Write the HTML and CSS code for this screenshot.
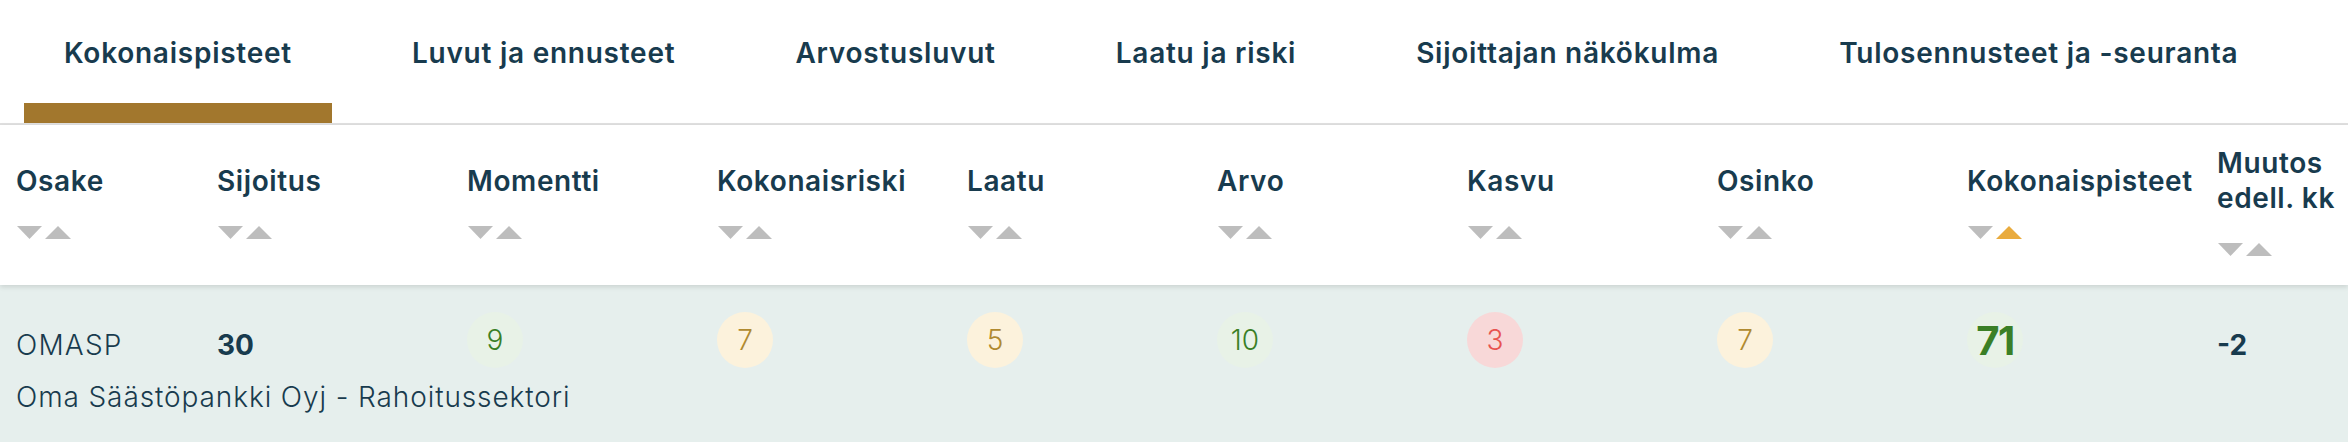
FILE: index.html
```html
<!DOCTYPE html>
<html lang="fi">
<head>
<meta charset="utf-8">
<title>Kokonaispisteet</title>
<link rel="stylesheet" href="styles.css">
</head>
<body>
<div class="page">
  <nav class="tabs">
    <a class="tab active">Kokonaispisteet</a>
    <a class="tab">Luvut ja ennusteet</a>
    <a class="tab">Arvostusluvut</a>
    <a class="tab">Laatu ja riski</a>
    <a class="tab">Sijoittajan näkökulma</a>
    <a class="tab">Tulosennusteet ja -seuranta</a>
  </nav>

  <div class="table">
    <div class="thead">
      <div class="th"><span class="th-label">Osake</span><svg class="sort" viewBox="0 0 54 13" width="54" height="13"><polygon class="dn" points="0,0 25,0 12.5,13"/><polygon class="up" points="28,13 54,13 41,0"/></svg></div>
      <div class="th"><span class="th-label">Sijoitus</span><svg class="sort" viewBox="0 0 54 13" width="54" height="13"><polygon class="dn" points="0,0 25,0 12.5,13"/><polygon class="up" points="28,13 54,13 41,0"/></svg></div>
      <div class="th"><span class="th-label">Momentti</span><svg class="sort" viewBox="0 0 54 13" width="54" height="13"><polygon class="dn" points="0,0 25,0 12.5,13"/><polygon class="up" points="28,13 54,13 41,0"/></svg></div>
      <div class="th"><span class="th-label">Kokonaisriski</span><svg class="sort" viewBox="0 0 54 13" width="54" height="13"><polygon class="dn" points="0,0 25,0 12.5,13"/><polygon class="up" points="28,13 54,13 41,0"/></svg></div>
      <div class="th"><span class="th-label">Laatu</span><svg class="sort" viewBox="0 0 54 13" width="54" height="13"><polygon class="dn" points="0,0 25,0 12.5,13"/><polygon class="up" points="28,13 54,13 41,0"/></svg></div>
      <div class="th"><span class="th-label">Arvo</span><svg class="sort" viewBox="0 0 54 13" width="54" height="13"><polygon class="dn" points="0,0 25,0 12.5,13"/><polygon class="up" points="28,13 54,13 41,0"/></svg></div>
      <div class="th"><span class="th-label">Kasvu</span><svg class="sort" viewBox="0 0 54 13" width="54" height="13"><polygon class="dn" points="0,0 25,0 12.5,13"/><polygon class="up" points="28,13 54,13 41,0"/></svg></div>
      <div class="th"><span class="th-label">Osinko</span><svg class="sort" viewBox="0 0 54 13" width="54" height="13"><polygon class="dn" points="0,0 25,0 12.5,13"/><polygon class="up" points="28,13 54,13 41,0"/></svg></div>
      <div class="th"><span class="th-label">Kokonaispisteet</span><svg class="sort" viewBox="0 0 54 13" width="54" height="13"><polygon class="dn" points="0,0 25,0 12.5,13"/><polygon class="up active" points="28,13 54,13 41,0"/></svg></div>
      <div class="th"><span class="th-label">Muutos<br>edell. kk</span><svg class="sort" viewBox="0 0 54 13" width="54" height="13"><polygon class="dn" points="0,0 25,0 12.5,13"/><polygon class="up" points="28,13 54,13 41,0"/></svg></div>
    </div>

    <div class="trow">
      <div class="td">
        <div class="txt ticker">OMASP</div>
        <div class="company">Oma Säästöpankki Oyj - Rahoitussektori</div>
      </div>
      <div class="td"><div class="txt strong">30</div></div>
      <div class="td"><span class="score good">9</span></div>
      <div class="td"><span class="score mid">7</span></div>
      <div class="td"><span class="score mid">5</span></div>
      <div class="td"><span class="score good">10</span></div>
      <div class="td"><span class="score bad">3</span></div>
      <div class="td"><span class="score mid">7</span></div>
      <div class="td"><span class="score good total">71</span></div>
      <div class="td"><div class="txt strong">-2</div></div>
    </div>
  </div>
</div>
</body>
</html>
```

FILE: styles.css
```css
html, body {
  margin: 0;
  padding: 0;
  background: #ffffff;
}

body {
  font-family: Inter, "Open Sans", "Liberation Sans", sans-serif;
  color: #183b4e;
  width: 2348px;
  height: 442px;
  overflow: hidden;
}

.page {
  display: flex;
  flex-direction: column;
  height: 442px;
}

/* Tabs */
.tabs {
  display: flex;
  gap: 40px;
  padding-left: 24px;
  border-bottom: 2px solid #e0e0e0;
  flex: 0 0 auto;
}

.tab {
  box-sizing: border-box;
  height: 123px;
  padding: 36px 40px 0;
  font-size: 28px;
  line-height: 34px;
  font-weight: 600;
  letter-spacing: 0.75px;
  color: #183b4e;
  white-space: nowrap;
  border-bottom: 20px solid transparent;
  text-decoration: none;
}

.tab.active {
  border-bottom-color: #a2772d;
}

/* Table */
.table {
  display: flex;
  flex-direction: column;
  flex: 1 1 auto;
}

.thead,
.trow {
  display: grid;
  grid-template-columns: 201px repeat(8, 250px) 1fr;
}

.thead {
  box-sizing: border-box;
  height: 160px;
  padding-bottom: 8px;
  background: #ffffff;
  position: relative;
  z-index: 1;
  box-shadow: 0 2px 5px rgba(0, 0, 0, 0.12);
}

.th {
  padding-left: 16px;
  display: flex;
  flex-direction: column;
  justify-content: center;
  align-items: flex-start;
}

.th-label {
  font-size: 28px;
  line-height: 35px;
  font-weight: 600;
  letter-spacing: 0.6px;
  white-space: nowrap;
}

.sort {
  display: block;
  margin-top: 27px;
  margin-left: 1px;
}

.sort polygon {
  fill: #bdbdbd;
}

.sort polygon.active {
  fill: #e9ab3e;
}

.trow {
  flex: 1 1 auto;
  background: #e6efed;
}

.td {
  padding: 27px 0 0 16px;
  min-width: 0;
}

.txt {
  margin-top: 16px;
  font-size: 28px;
  line-height: 35px;
  white-space: nowrap;
}

.ticker {
  font-weight: 300;
  letter-spacing: 1.2px;
}

.strong {
  font-weight: 700;
}

.company {
  margin-top: 17px;
  font-size: 28px;
  line-height: 35px;
  font-weight: 300;
  letter-spacing: 0.9px;
  white-space: nowrap;
}

.score {
  display: flex;
  align-items: center;
  justify-content: center;
  width: 56px;
  height: 56px;
  border-radius: 50%;
  font-size: 28px;
  font-weight: 300;
}

.score.good {
  background: #e8f2e7;
  color: #3a7f26;
}

.score.mid {
  background: #fcf2dc;
  color: #b08a30;
}

.score.bad {
  background: #f8d8d8;
  color: #e8534f;
}

.score.total {
  font-size: 40px;
  font-weight: 700;
  letter-spacing: -1.5px;
}
```
